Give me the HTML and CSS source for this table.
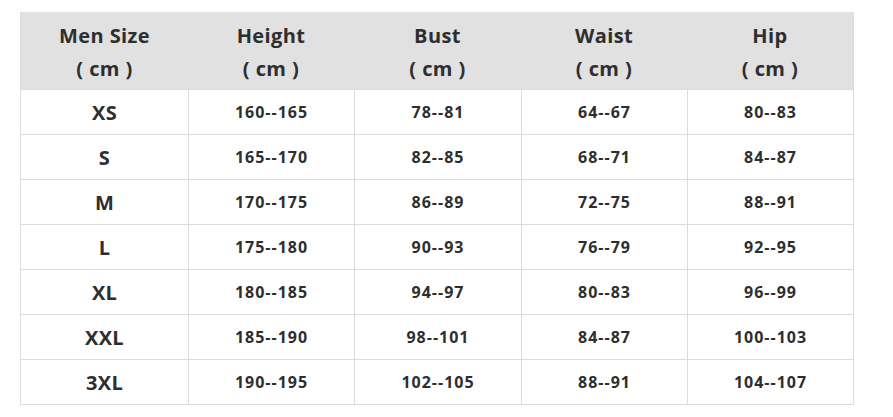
FILE: index.html
```html
<!DOCTYPE html>
<html>
<head>
<meta charset="utf-8">
<link rel="stylesheet" href="styles.css">
</head>
<body>
<div class="chart">
  <div class="row head">
    <div class="cell">Men Size<br>( cm )</div>
    <div class="cell">Height<br>( cm )</div>
    <div class="cell">Bust<br>( cm )</div>
    <div class="cell">Waist<br>( cm )</div>
    <div class="cell">Hip<br>( cm )</div>
  </div>
  <div class="row"><div class="cell size">XS</div><div class="cell">160--165</div><div class="cell">78--81</div><div class="cell">64--67</div><div class="cell">80--83</div></div>
  <div class="row"><div class="cell size">S</div><div class="cell">165--170</div><div class="cell">82--85</div><div class="cell">68--71</div><div class="cell">84--87</div></div>
  <div class="row"><div class="cell size">M</div><div class="cell">170--175</div><div class="cell">86--89</div><div class="cell">72--75</div><div class="cell">88--91</div></div>
  <div class="row"><div class="cell size">L</div><div class="cell">175--180</div><div class="cell">90--93</div><div class="cell">76--79</div><div class="cell">92--95</div></div>
  <div class="row"><div class="cell size">XL</div><div class="cell">180--185</div><div class="cell">94--97</div><div class="cell">80--83</div><div class="cell">96--99</div></div>
  <div class="row"><div class="cell size">XXL</div><div class="cell">185--190</div><div class="cell">98--101</div><div class="cell">84--87</div><div class="cell">100--103</div></div>
  <div class="row"><div class="cell size">3XL</div><div class="cell">190--195</div><div class="cell">102--105</div><div class="cell">88--91</div><div class="cell">104--107</div></div>
</div>
</body>
</html>
```

FILE: styles.css
```css
* { box-sizing: border-box; }
body {
  margin: 0;
  padding: 12px 0 0 20px;
  background: #fff;
  font-family: "Open Sans", "DejaVu Sans", sans-serif;
  font-weight: 700;
  color: #2e2e2e;
}
.chart {
  width: 834px;
  border-left: 1px solid #dcdcdc;
  border-right: 1px solid #dcdcdc;
  border-bottom: 1px solid #dcdcdc;
}
.row {
  display: grid;
  grid-template-columns: 167px 166px 167px 166px 1fr;
  height: 45px;
  border-top: 1px solid #dcdcdc;
}
.row.head {
  height: 77px;
  border-top: none;
  background: #e1e1e1;
}
.cell {
  display: flex;
  align-items: center;
  justify-content: center;
  text-align: center;
  font-size: 16px;
  letter-spacing: 1px;
  border-left: 1px solid #dcdcdc;
}
.cell:first-child { border-left: none; }
.head .cell {
  border-left: none;
  font-size: 20px;
  line-height: 33px;
  letter-spacing: 0.4px;
  padding-top: 2px;
}
.cell.size { font-size: 20px; letter-spacing: 0.3px; }
```
